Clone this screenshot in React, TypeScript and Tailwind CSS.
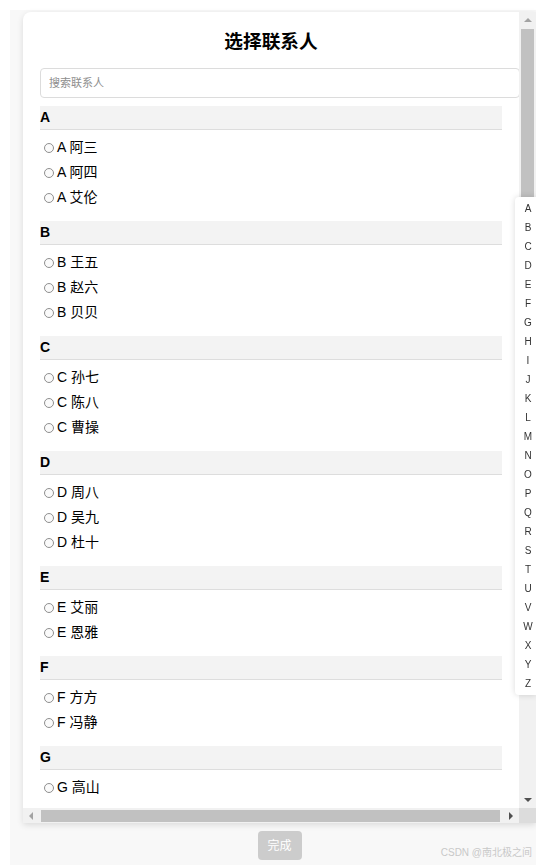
import { useState } from "react";

const FONT = { fontFamily: '"Liberation Sans", "Noto Sans CJK SC", sans-serif' };

const GROUPS: { letter: string; names: string[] }[] = [
  { letter: "A", names: ["阿三", "阿四", "艾伦"] },
  { letter: "B", names: ["王五", "赵六", "贝贝"] },
  { letter: "C", names: ["孙七", "陈八", "曹操"] },
  { letter: "D", names: ["周八", "吴九", "杜十"] },
  { letter: "E", names: ["艾丽", "恩雅"] },
  { letter: "F", names: ["方方", "冯静"] },
  { letter: "G", names: ["高山"] },
  { letter: "H", names: ["韩梅", "何平", "黄蓉"] },
  { letter: "L", names: ["李雷", "刘备"] },
];

const LETTERS = "ABCDEFGHIJKLMNOPQRSTUVWXYZ".split("");

function ContactRow({ label, checked, onPick }: { label: string; checked: boolean; onPick: () => void }) {
  return (
    <div onClick={onPick} className="flex h-[25px] cursor-pointer items-center gap-[3px] pl-[4px] text-[14px] text-black">
      <span className="flex h-[10px] w-[10px] items-center justify-center rounded-full border border-[#8f8f8f] bg-[#fafafa]">
        {checked ? <span className="h-[4px] w-[4px] rounded-full bg-[#333]" /> : null}
      </span>
      <span>{label}</span>
    </div>
  );
}

function VerticalBar() {
  return (
    <div className="flex w-[17px] flex-col bg-[#f1f1f1]">
      <div className="flex h-[16px] items-center justify-center">
        <span className="h-0 w-0 border-x-[4px] border-b-[4px] border-x-transparent border-b-[#a3a3a3]" />
      </div>
      <div className="ml-[2px] mt-[1px] h-[330px] w-[13px] bg-[#c1c1c1]" />
      <div className="flex-1" />
      <div className="flex h-[16px] items-center justify-center">
        <span className="h-0 w-0 border-x-[4px] border-t-[4px] border-x-transparent border-t-[#505050]" />
      </div>
    </div>
  );
}

function HorizontalBar() {
  return (
    <div className="flex h-[15px]">
      <div className="flex flex-1 items-center bg-[#f1f1f1]">
        <div className="flex w-[16px] items-center justify-center">
          <span className="h-0 w-0 border-y-[4px] border-r-[4px] border-y-transparent border-r-[#a3a3a3]" />
        </div>
        <div className="ml-[2px] h-[12px] w-[459px] bg-[#c1c1c1]" />
        <div className="flex-1" />
        <div className="flex w-[16px] items-center justify-center">
          <span className="h-0 w-0 border-y-[4px] border-l-[4px] border-y-transparent border-l-[#505050]" />
        </div>
      </div>
      <div className="w-[17px] bg-[#dcdcdc]" />
    </div>
  );
}

export default function App() {
  const [picked, setPicked] = useState<string[]>([]);

  function toggle(key: string) {
    setPicked((prev) => (prev.includes(key) ? prev.filter((k) => k !== key) : [...prev, key]));
  }

  return (
    <div className="bg-white pl-[10px] pt-[10px]" style={FONT}>
      <div className="relative h-[855px] bg-[#f8f8f8] pl-[13px] pt-[2px]">
        <div className="flex h-[811px] w-[513px] flex-col overflow-hidden rounded-tl-[8px] bg-white shadow-[0_2px_6px_rgba(0,0,0,0.12)]">
          <div className="flex min-h-0 flex-1">
            <div className="min-w-0 flex-1 overflow-auto [scrollbar-width:none]">
              <div className="px-[17px] pt-[15px]">
                <h3 className="text-center text-[18.72px] font-bold leading-[30px] text-black">选择联系人</h3>
                <input
                  type="text"
                  placeholder="搜索联系人"
                  className="mt-[11px] block h-[30px] w-[480px] rounded-[4px] border border-[#dcdcdc] px-[8px] text-[11px] outline-none placeholder:text-[#8e8e8e]"
                />
                <div className="pt-[8px] pb-[10px]">
                  {GROUPS.map((group) => (
                    <div key={group.letter} className="pb-[11px]">
                      <div className="flex h-[24px] items-center border-b border-[#dddddd] bg-[#f3f3f3] text-[14px] font-bold text-black">
                        {group.letter}
                      </div>
                      <div className="pt-[5px]">
                        {group.names.map((name) => {
                          const key = group.letter + name;
                          return (
                            <ContactRow
                              key={key}
                              label={`${group.letter} ${name}`}
                              checked={picked.includes(key)}
                              onPick={() => toggle(key)}
                            />
                          );
                        })}
                      </div>
                    </div>
                  ))}
                </div>
              </div>
            </div>
            <VerticalBar />
          </div>
          <HorizontalBar />
        </div>

        <div className="flex w-[513px] justify-center pt-[8px]">
          <button type="button" className="h-[29px] w-[44px] rounded-[4px] bg-[#cccccc] text-[12px] text-white">
            完成
          </button>
        </div>

        <div className="absolute bottom-[5px] right-[4px] text-[10px] text-[#c8c8c8]">CSDN @南北极之间</div>
      </div>

      <div className="fixed right-0 top-[197px] z-10 w-[21px] rounded-l-[4px] bg-white py-[2px] shadow-[0_0_6px_rgba(0,0,0,0.15)]">
        {LETTERS.map((letter) => (
          <div key={letter} className="flex h-[19px] items-center justify-center pl-[5px] text-[10px] text-[#333]">
            {letter}
          </div>
        ))}
      </div>
    </div>
  );
}
